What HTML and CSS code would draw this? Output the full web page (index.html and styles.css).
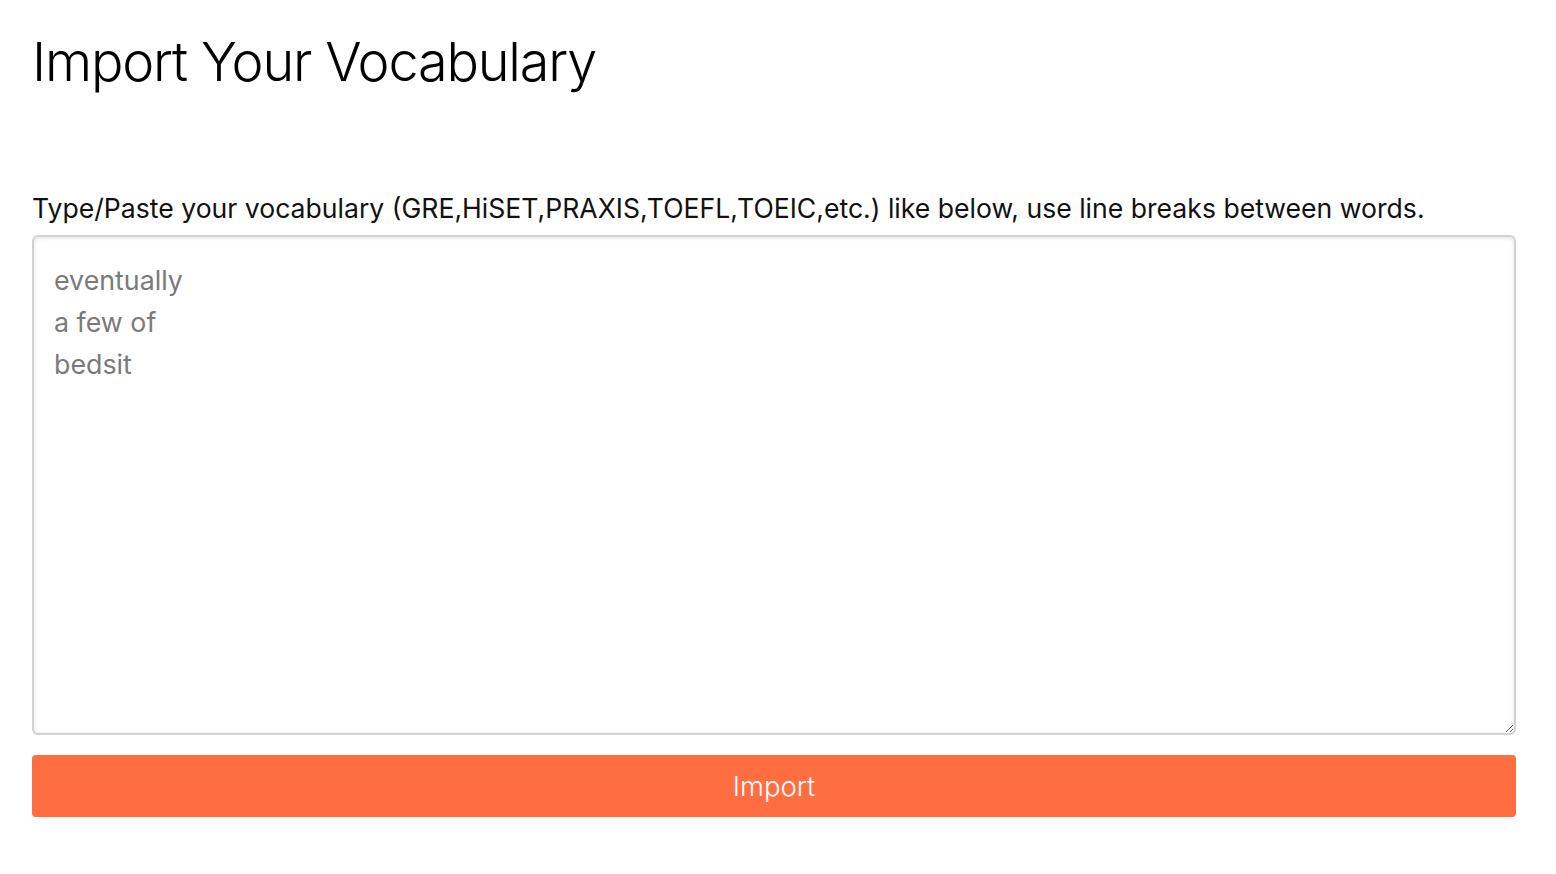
FILE: index.html
```html
<!DOCTYPE html>
<html lang="en">
<head>
<meta charset="utf-8">
<title>Import Your Vocabulary</title>
<link rel="stylesheet" href="styles.css">
</head>
<body>
<main class="page">
  <h1 class="title">Import Your Vocabulary</h1>
  <form class="import-form">
    <label class="label" for="vocab">Type/Paste your vocabulary (GRE,HiSET,PRAXIS,TOEFL,TOEIC,etc.) like below, use line breaks between words.</label>
    <textarea id="vocab" class="vocab" placeholder="eventually&#10;a few of&#10;bedsit"></textarea>
    <button type="button" class="import-btn">Import</button>
  </form>
</main>
</body>
</html>
```

FILE: styles.css
```css
html, body {
  margin: 0;
  padding: 0;
  background: #fff;
}
body {
  font-family: "Inter", "Helvetica Neue", "Liberation Sans", sans-serif;
  color: #111;
}
.page {
  padding: 0 40px 0 32px;
}
.title {
  margin: 0;
  padding-top: 28px;
  font-size: 54px;
  font-weight: 300;
  line-height: 68px;
  letter-spacing: -1.2px;
  color: #000;
}
.import-form {
  display: flex;
  flex-direction: column;
  margin-top: 94px;
}
.label {
  font-size: 26.6px;
  line-height: 36px;
  color: #111;
  margin-bottom: 9px;
}
.vocab {
  box-sizing: border-box;
  height: 500px;
  padding: 22px 20px;
  font-family: inherit;
  font-size: 26.8px;
  line-height: 42px;
  border: 2px solid #d2d2d2;
  border-radius: 6px;
  box-shadow: inset 0 1px 4px rgba(0,0,0,0.12);
  resize: vertical;
  outline: none;
}
.vocab::placeholder {
  color: #7a7a7a;
}
.import-btn {
  margin-top: 20px;
  height: 62px;
  border: none;
  border-radius: 4px;
  background: #ff6e40;
  color: #fff;
  font-family: inherit;
  font-size: 27.5px;
  font-weight: 300;
  cursor: pointer;
}
```
